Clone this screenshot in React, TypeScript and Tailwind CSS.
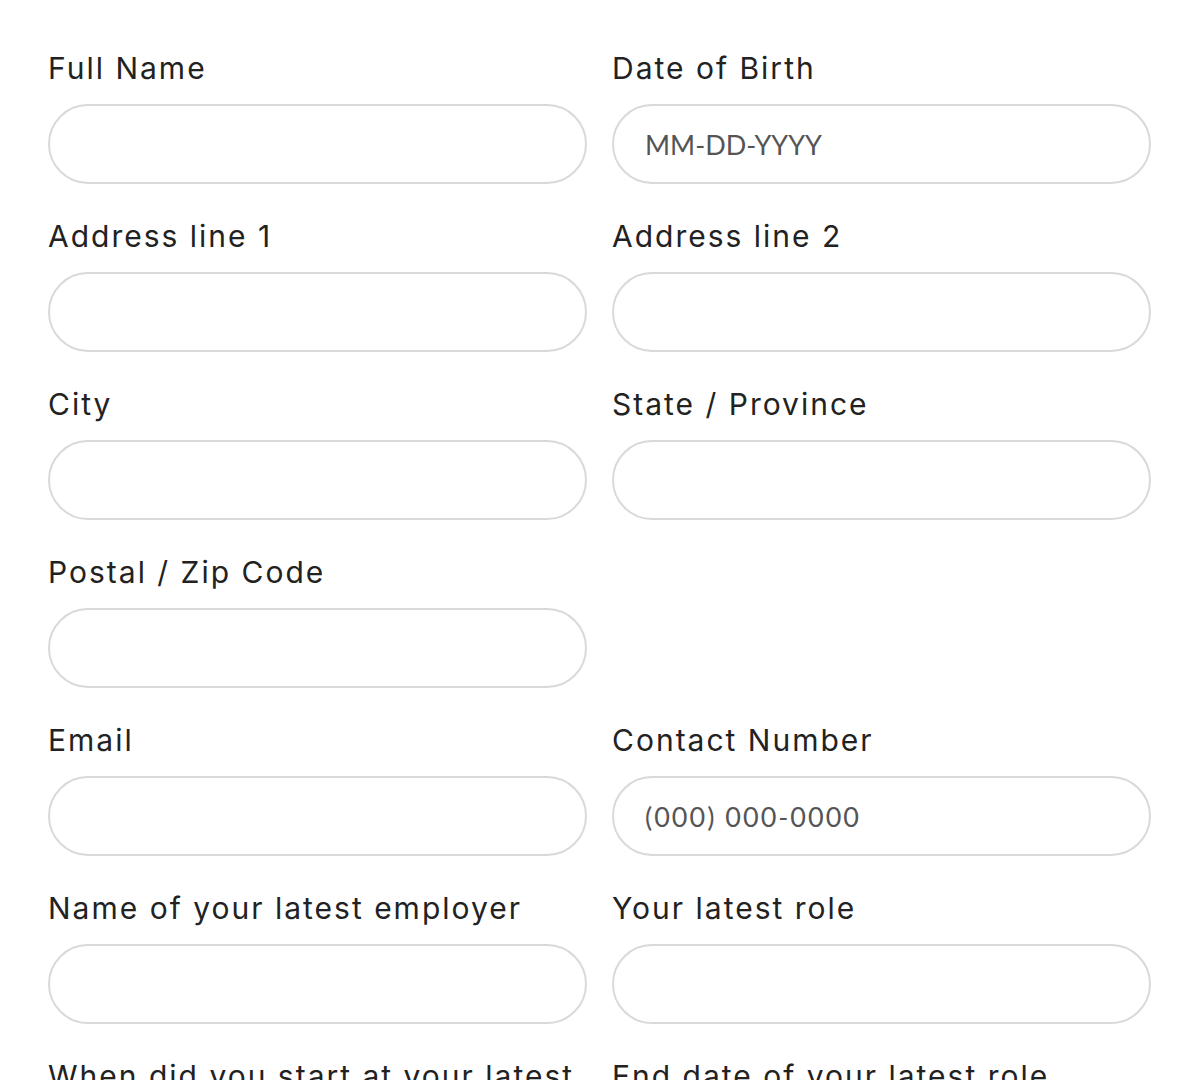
import React from "react";

const labelFont = { fontFamily: "Inter, 'Noto Sans', sans-serif" };

function Field({ label, placeholder, wide }: { label: string; placeholder?: string; wide?: boolean }) {
  return (
    <div className="flex flex-col">
      <label className="text-[30px] leading-[36px] tracking-[2px] text-[#222222] pt-[34px] pb-[18px] font-normal" style={labelFont}>
        {label}
      </label>
      <input
        placeholder={placeholder}
        className={
          wide
            ? "h-[80px] w-full rounded-full border-2 border-[#d9d9d9] bg-white px-[31px] text-[27px] tracking-[2px] text-[#333] placeholder:text-[#555555] outline-none"
            : "h-[80px] w-full rounded-full border-2 border-[#d9d9d9] bg-white px-[31px] text-[27px] text-[#333] placeholder:text-[#555555] outline-none"
        }
        style={{ fontFamily: "Lato, sans-serif" }}
      />
    </div>
  );
}

export default function App() {
  return (
    <div className="min-h-[1080px] bg-white pl-[48px] pr-[49px] pt-[16px]">
      <div className="grid grid-cols-2 gap-x-[25px]">
        <Field label="Full Name" />
        <Field label="Date of Birth" placeholder="MM-DD-YYYY" />
        <Field label="Address line 1" />
        <Field label="Address line 2" />
        <Field label="City" />
        <Field label="State / Province" />
        <Field label="Postal / Zip Code" />
        <div />
        <Field label="Email" />
        <Field label="Contact Number" placeholder="(000) 000-0000" wide />
        <Field label="Name of your latest employer" />
        <Field label="Your latest role" />
        <Field label="When did you start at your latest role?" />
        <Field label="End date of your latest role" />
      </div>
    </div>
  );
}
